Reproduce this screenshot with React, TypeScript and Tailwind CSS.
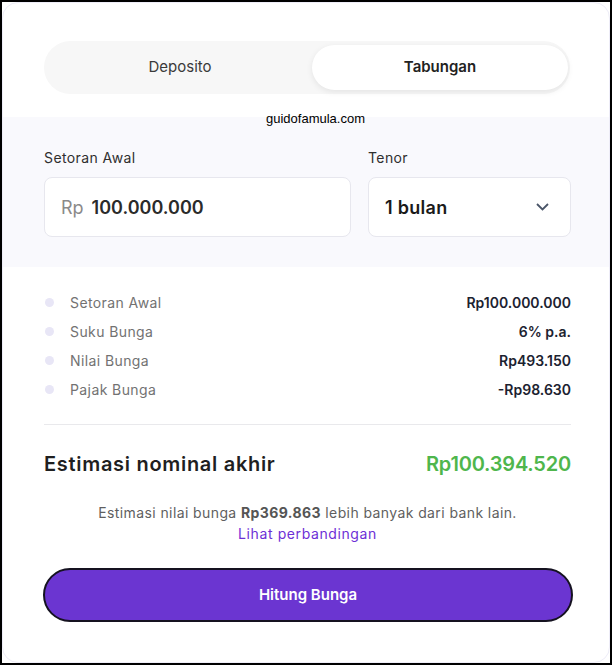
const ROWS = [
  { label: "Setoran Awal", value: "Rp100.000.000" },
  { label: "Suku Bunga", value: "6% p.a." },
  { label: "Nilai Bunga", value: "Rp493.150" },
  { label: "Pajak Bunga", value: "-Rp98.630" },
] as const

export default function App() {
  return (
    <div className="h-[665px] w-[612px] border-2 border-black bg-white font-['Inter',sans-serif]">
      <div className="flex h-full flex-col rounded-[16px] border border-[#eeedf8] bg-white">
        <div className="pb-[23px] pl-[41px] pr-[39px] pt-[38px]">
          <div className="flex h-[53px] rounded-full bg-[#f7f7f7] py-1 pl-1 pr-[2px]">
            <button className="flex-1 text-[15px] text-[#3a3a3a]">Deposito</button>
            <button className="w-[256px] rounded-full bg-white text-[15px] font-semibold text-[#222] shadow-[0_2px_6px_rgba(0,0,0,0.08)]">
              Tabungan
            </button>
          </div>
        </div>

        <div className="relative bg-[#f9f9fd] pb-[30px] pl-[41px] pr-[38px] pt-[31px]">
          <span className="absolute left-[263px] top-[-5px] font-['Liberation_Sans',sans-serif] text-[13px] leading-[14px] text-black">
            guidofamula.com
          </span>
          <div className="grid grid-cols-[307px_1fr] gap-[17px]">
            <div>
              <p className="mb-[9px] text-[14px] leading-[20px] tracking-[0.4px] text-[#2f2f2f]">Setoran Awal</p>
              <div className="flex h-[60px] items-center gap-2 rounded-[8px] border border-[#e7e7ee] bg-white px-4">
                <span className="text-[18px] text-[#8a8a8a]">Rp</span>
                <span className="text-[18px] font-semibold text-[#2b2b2b]">100.000.000</span>
              </div>
            </div>
            <div>
              <p className="mb-[9px] text-[14px] leading-[20px] tracking-[0.4px] text-[#2f2f2f]">Tenor</p>
              <div className="flex h-[60px] items-center justify-between rounded-[8px] border border-[#e7e7ee] bg-white pl-4 pr-[21px]">
                <span className="text-[18px] font-semibold tracking-[0.3px] text-[#1a1a1a]">1 bulan</span>
                <svg width="13" height="8" viewBox="0 0 13 8" fill="none">
                  <polyline points="1,1 6.5,6.5 12,1" stroke="#4a5568" strokeWidth="1.8" />
                </svg>
              </div>
            </div>
          </div>
        </div>

        <div className="flex flex-col pl-[41px] pr-[38px] pt-[21px]">
          {ROWS.map((row) => (
            <div key={row.label} className="flex h-[29px] items-center justify-between">
              <div className="flex items-center gap-4">
                <span className="ml-[1px] h-[9px] w-[9px] rounded-full bg-[#e8e6f6]" />
                <span className="text-[14px] tracking-[0.4px] text-[#727272]">{row.label}</span>
              </div>
              <span className="text-[14px] font-semibold text-[#1c2230]">{row.value}</span>
            </div>
          ))}

          <div className="mt-[20px] h-px bg-[#e9e9ec]" />

          <div className="mt-[25px] flex h-[28px] items-center justify-between">
            <span className="text-[20px] font-semibold tracking-[0.7px] text-[#1f1f1f]">Estimasi nominal akhir</span>
            <span className="text-[20px] font-semibold tracking-[-0.2px] text-[#4fb64c]">Rp100.394.520</span>
          </div>

          <div className="mt-[24px] text-center text-[14px] leading-[21px] tracking-[0.4px] text-[#5f5f5f]">
            <p>
              Estimasi nilai bunga <span className="font-bold text-[#555]">Rp369.863</span> lebih banyak dari bank lain.
            </p>
            <p className="tracking-[0.6px] text-[#6d2fd6]">Lihat perbandingan</p>
          </div>

          <button className="-ml-px mt-[24px] h-[54px] w-[530px] rounded-full border-2 border-[#151220] bg-[#6b35d1] text-[15px] font-semibold text-white">
            Hitung Bunga
          </button>
        </div>
      </div>
    </div>
  )
}
